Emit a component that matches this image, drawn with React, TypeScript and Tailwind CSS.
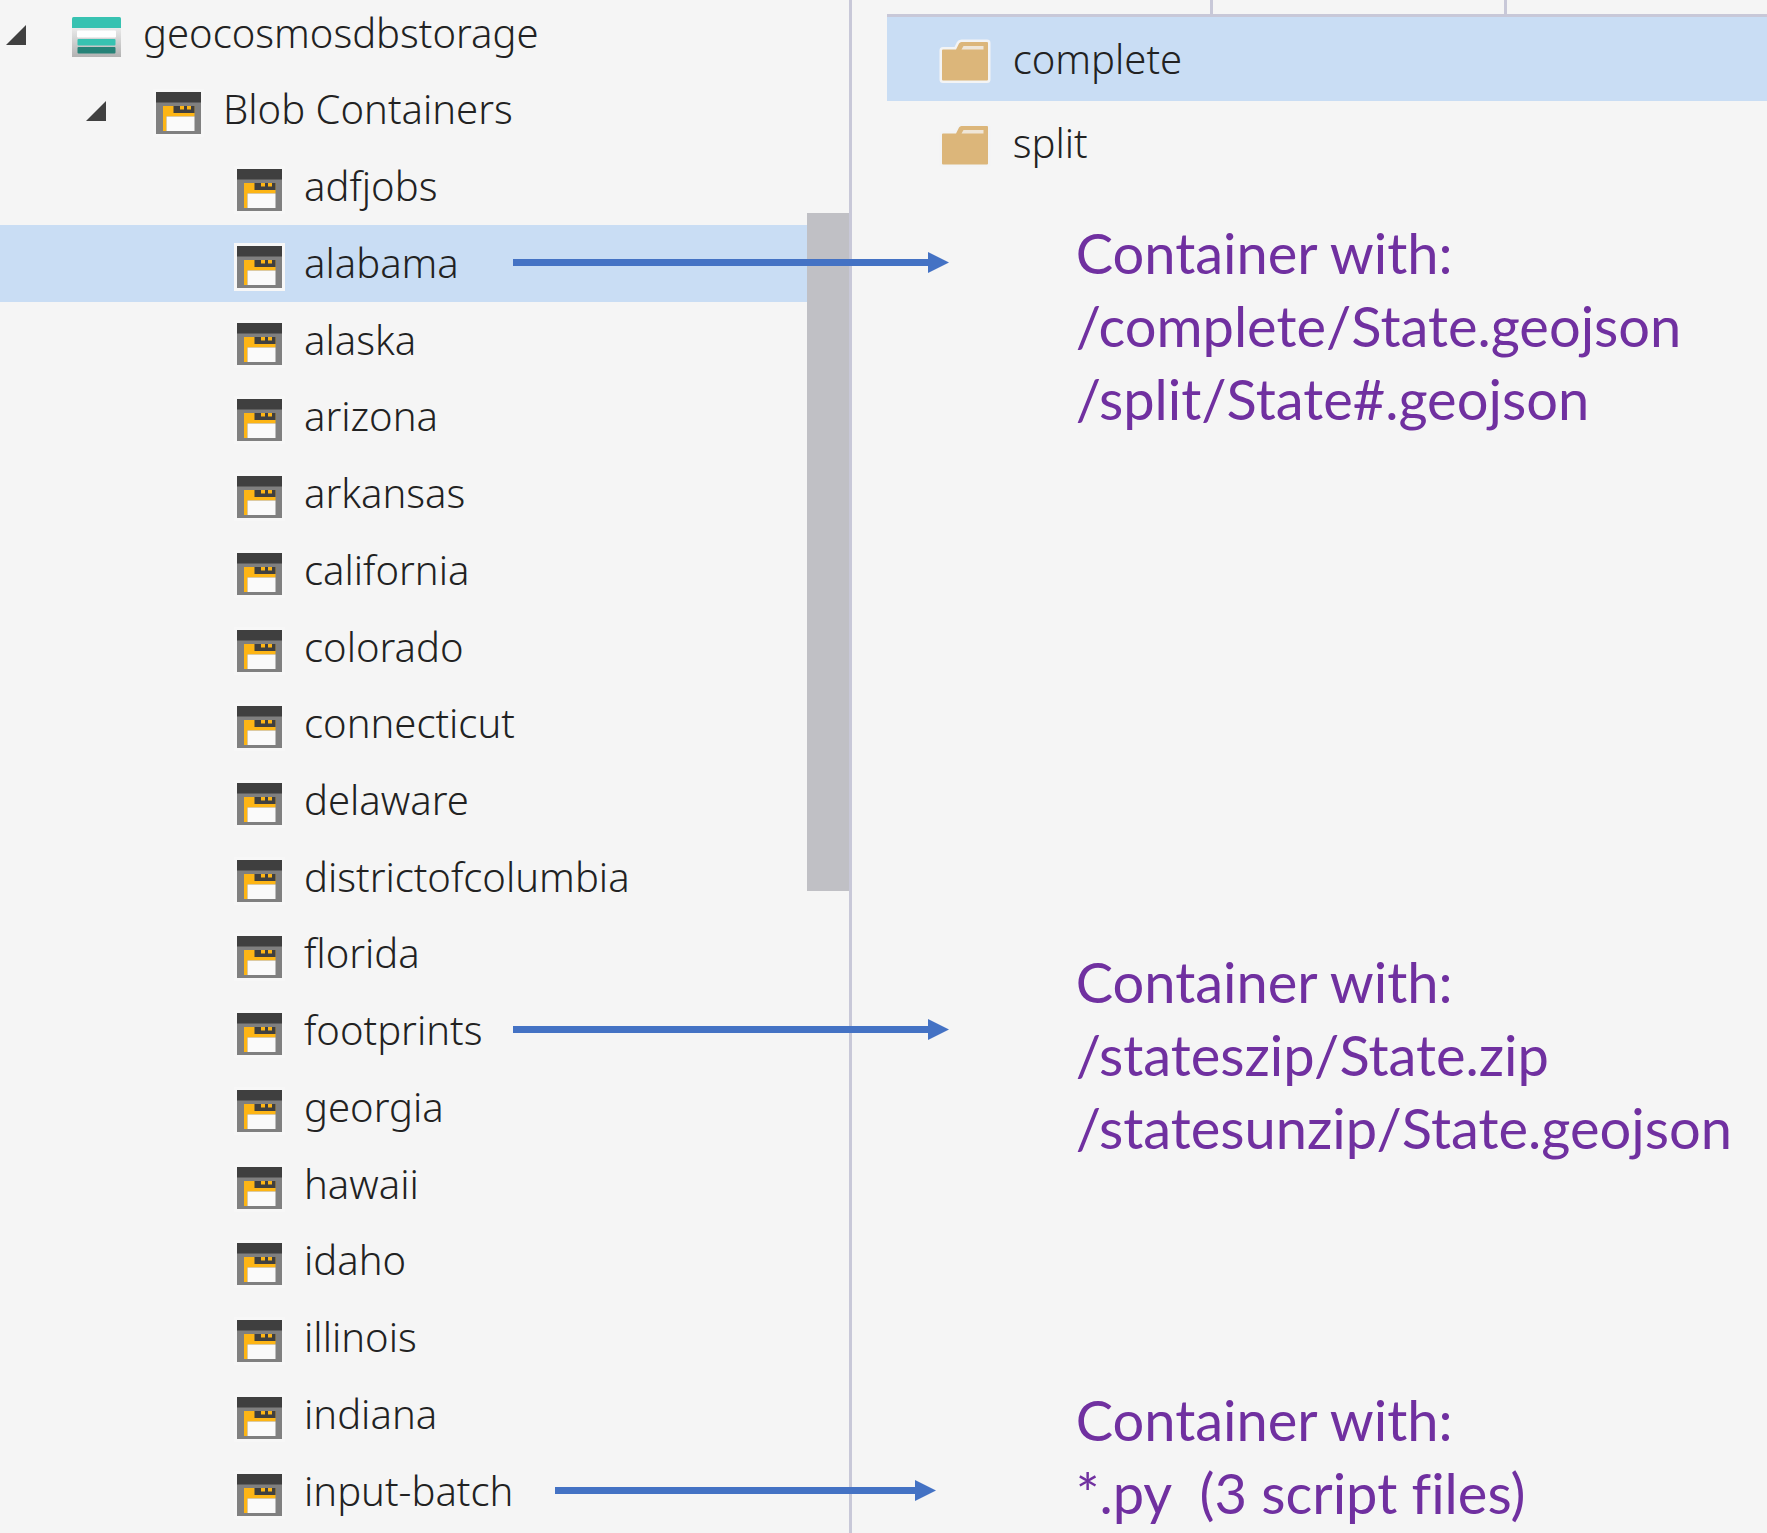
import React from "react";

type Arrow = "long" | "short";

const containers: { name: string; arrow?: Arrow }[] = [
  { name: "adfjobs" },
  { name: "alabama", arrow: "long" },
  { name: "alaska" },
  { name: "arizona" },
  { name: "arkansas" },
  { name: "california" },
  { name: "colorado" },
  { name: "connecticut" },
  { name: "delaware" },
  { name: "districtofcolumbia" },
  { name: "florida" },
  { name: "footprints", arrow: "long" },
  { name: "georgia" },
  { name: "hawaii" },
  { name: "idaho" },
  { name: "illinois" },
  { name: "indiana" },
  { name: "input-batch", arrow: "short" },
];

function Caret() {
  return (
    <svg className="mt-0.5 h-5 w-5 shrink-0" viewBox="0 0 20 20" aria-hidden="true">
      <path d="M20 0V20H0Z" fill="#404040" />
    </svg>
  );
}

function StorageIcon() {
  return (
    <svg className="mt-1.5 h-10 w-[49px] shrink-0" viewBox="0 0 49 40" aria-hidden="true">
      <defs>
        <linearGradient id="storage-body" x1="0" y1="0" x2="0" y2="1">
          <stop offset="0" stopColor="#ececec" />
          <stop offset="1" stopColor="#b2b2b2" />
        </linearGradient>
      </defs>
      <rect y="10" width="49" height="30" fill="url(#storage-body)" />
      <path d="M0 11V1.500Q0 0 1.500 0H47.500Q49 0 49 1.500V11Z" fill="#37c2b1" />
      <rect x="5" y="13.500" width="39" height="7" rx="1" fill="#fff" />
      <rect x="5.500" y="22" width="38" height="6.500" rx="1" fill="#37c2b1" />
      <rect x="5.500" y="30" width="38" height="6.500" rx="1" fill="#258277" />
    </svg>
  );
}

function BlobIcon() {
  return (
    <svg className="mt-1.5 h-12 w-[51px] shrink-0" viewBox="-3 -3 51 48" aria-hidden="true">
      <rect x="-3" y="-3" width="51" height="48" fill="#f7f7f7" />
      <rect width="45" height="42" fill="#808080" />
      <rect width="45" height="10.500" fill="#3f3f3f" />
      <path d="M7 14H38.500V24.500H10.500V39H7Z" fill="#fdb515" />
      <path d="M17.500 14H38.500V21H17.500Z" fill="#3f3f3f" />
      <path d="M24 14H28V17.500H24ZM31 14H35V17.500H31Z" fill="#fdb515" />
      <rect x="10.500" y="24.500" width="28" height="14.500" fill="#fafafa" />
    </svg>
  );
}

function FolderIcon() {
  return (
    <svg className="mt-1 h-[46px] w-[54px] shrink-0" viewBox="-4 -4 54 46" aria-hidden="true">
      <path
        d="M1 7.500H14L17 1.500Q17.800 0 19.500 0H45Q46 0 46 1V37.500Q46 38.500 45 38.500H1Q0 38.500 0 37.500V8.500Q0 7.500 1 7.500Z"
        fill="#dcb67a"
        stroke="#f3f4f5"
        strokeWidth="5"
        strokeLinejoin="round"
        paintOrder="stroke"
      />
      <path d="M21.500 4H41.500V7.500H19.500Z" fill="#efe6d8" />
    </svg>
  );
}

function ArrowLine({ size }: { size: Arrow }) {
  return (
    <span
      aria-hidden="true"
      className={
        size === "long"
          ? "absolute top-1/2 left-[513px] z-10 flex w-[436px] -translate-y-3 items-center"
          : "absolute top-1/2 left-[555px] z-10 flex w-[381px] -translate-y-3 items-center"
      }
    >
      <span className="h-[7px] flex-1 bg-[#4472c4]" />
      <svg className="h-[21px] w-[21px]" viewBox="0 0 21 21">
        <path d="M0 0L21 10.500L0 21Z" fill="#4472c4" />
      </svg>
    </span>
  );
}

function Note({ lines }: { lines: string[] }) {
  return (
    <div className="font-[Lato,sans-serif] text-[56px] leading-[73px] font-normal whitespace-pre text-[#7030a0] [font-variant-ligatures:none]">
      {lines.map((line) => (
        <p key={line}>{line}</p>
      ))}
    </div>
  );
}

export default function App() {
  return (
    <div className="flex min-h-screen overflow-hidden bg-[#f5f5f5] font-['Noto_Sans',sans-serif] text-[40px] leading-[52px] font-light text-[#222]">
      <nav aria-label="Storage tree" className="relative w-[48.2%] shrink-0 border-r-3 border-[#c8c8d8]">
        <ul className="grid h-full grid-rows-[72px_repeat(19,minmax(52px,1fr))] pb-[3px]">
          <li className="flex">
            <button type="button" aria-expanded="true" className="flex w-full items-center pb-[5px] pl-1.5">
              <Caret />
              <span className="w-[46px]" />
              <StorageIcon />
              <span className="-mt-0.5 ml-[22px]">geocosmosdbstorage</span>
            </button>
          </li>
          <li className="flex">
            <button type="button" aria-expanded="true" className="flex w-full items-center pl-[86px]">
              <Caret />
              <span className="w-[47px]" />
              <BlobIcon />
              <span className="-mt-0.5 ml-[19px]">Blob Containers</span>
            </button>
          </li>
          {containers.map(({ name, arrow }) => (
            <li key={name} className="relative flex">
              <button
                type="button"
                className={
                  name === "alabama"
                    ? "flex w-full items-center bg-[#c9ddf4] pl-[234px]"
                    : "flex w-full items-center pl-[234px]"
                }
              >
                <BlobIcon />
                <span className="-mt-0.5 ml-[19px]">{name}</span>
              </button>
              {arrow && <ArrowLine size={arrow} />}
            </li>
          ))}
        </ul>
        <div className="absolute top-[213px] right-0 h-[678px] w-[42px] bg-[#c0c0c5]" />
      </nav>

      <main className="min-w-0 flex-1 pl-[35px]">
        <div className="grid h-[17px] grid-cols-[326px_294px_1fr] border-b-3 border-[#c8c8d8]">
          <span className="border-r-3 border-[#c8c8d8]" />
          <span className="border-r-3 border-[#c8c8d8]" />
          <span />
        </div>
        <ul>
          <li>
            <button type="button" className="flex h-[84px] w-full items-center bg-[#c9ddf4] pl-[51px]">
              <FolderIcon />
              <span className="ml-[21px]">complete</span>
            </button>
          </li>
          <li>
            <button type="button" className="flex h-[84px] w-full items-center pl-[51px]">
              <FolderIcon />
              <span className="ml-[21px]">split</span>
            </button>
          </li>
        </ul>
        <div className="pt-[31px] pl-[189px]">
          <Note lines={["Container with:", "/complete/State.geojson", "/split/State#.geojson"]} />
          <div className="h-[510px]" />
          <Note lines={["Container with:", "/stateszip/State.zip", "/statesunzip/State.geojson"]} />
          <div className="h-[219px]" />
          <Note lines={["Container with:", "*.py  (3 script files)"]} />
        </div>
      </main>
    </div>
  );
}
